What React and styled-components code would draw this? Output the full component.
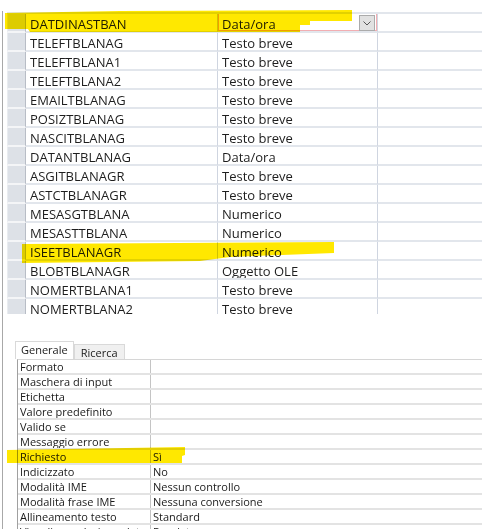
import React from 'react';
import styled, { createGlobalStyle } from 'styled-components';

const GlobalStyle = createGlobalStyle`
  html, body { margin: 0; padding: 0; background: #fff; }
  #root { width: 482px; height: 529px; }
`;

const Screen = styled.div`
  position: relative;
  width: 482px;
  height: 529px;
  overflow: hidden;
  background: #fff;
  padding-top: 11px;
  box-sizing: border-box;
`;

const Frame = styled.div`
  margin-left: 2px;
  height: 100%;
  border-left: 1px solid #a8a8a8;
  display: flex;
  flex-direction: column;
`;

/* ---------- field design grid ---------- */

const DesignGrid = styled.div`
  margin-left: 4px;
  margin-top: 1px;
  height: 300px;
  overflow: hidden;
  border-top: 2px solid #e2e6ec;
  flex: none;
`;

const GridRow = styled.div`
  display: grid;
  grid-template-columns: 19px 192px 160px 1fr;
  height: 19px;
`;

const Selector = styled.div`
  box-sizing: border-box;
  background: #dde1e7;
  border-left: 1px solid #e9ecf0;
  border-right: 1px solid #b8bdc6;
  border-bottom: 2px solid #f4f5f7;
`;

const Cell = styled.div`
  position: relative;
  box-sizing: border-box;
  border-bottom: 2px solid #e2e6ec;
  border-right: ${(p) => (p.$last ? 'none' : '1px solid #cfd5e0')};
  padding: 1px 0 0 4px;
  font-family: "Open Sans", "Noto Sans", sans-serif;
  font-size: 13px;
  line-height: 18px;
  color: #1e1e1e;
  white-space: nowrap;
  overflow: hidden;
`;

const ActiveCell = styled.div`
  position: absolute;
  left: -1px;
  top: -2px;
  right: -1px;
  bottom: -1px;
  border: 2px solid #f2aeb2;
  pointer-events: none;
`;

const DropButton = styled.div`
  position: absolute;
  right: 2px;
  top: 1px;
  width: 16px;
  height: 16px;
  box-sizing: border-box;
  background: #e1e1e1;
  border: 1px solid #ababab;
  display: flex;
  align-items: center;
  justify-content: center;
`;

/* ---------- field properties ---------- */

const PropertyPane = styled.div`
  margin-top: 27px;
  display: flex;
  flex-direction: column;
  font-family: "Open Sans", "Noto Sans", sans-serif;
  font-size: 11px;
  color: #1a1a1a;
`;

const TabStrip = styled.div`
  display: flex;
  align-items: flex-end;
  margin-left: 12px;
  height: 18px;
`;

const Tab = styled.div`
  box-sizing: border-box;
  height: ${(p) => (p.$active ? '18px' : '15px')};
  padding: 0 ${(p) => (p.$active ? '5px' : '6px')};
  background: ${(p) => (p.$active ? '#ffffff' : '#f0f0f0')};
  border: 1px solid #d9d9d9;
  border-bottom: none;
  line-height: ${(p) => (p.$active ? '16px' : '15px')};
  white-space: nowrap;
`;

const PropTable = styled.div`
  margin-left: 14px;
  border-top: 1px solid #d6d6d6;
  border-left: 1px solid #a0a0a0;
`;

const PropRow = styled.div`
  display: grid;
  grid-template-columns: 133px 1fr;
  height: 15px;
  box-sizing: border-box;
  border-bottom: 2px solid #e3e3e3;
`;

const PropLabel = styled.div`
  padding-left: 2px;
  border-right: 1px solid #c4c4c4;
  line-height: 13px;
  white-space: nowrap;
  overflow: hidden;
`;

const PropValue = styled.div`
  padding-left: 2px;
  line-height: 13px;
  white-space: nowrap;
  overflow: hidden;
`;

/* ---------- marker strokes drawn on top ---------- */

const Marker = styled.svg`
  position: absolute;
  left: 0;
  top: 0;
  width: 482px;
  height: 529px;
  pointer-events: none;
  mix-blend-mode: multiply;
`;

const fields = [
  ['DATDINASTBAN', 'Data/ora'],
  ['TELEFTBLANAG', 'Testo breve'],
  ['TELEFTBLANA1', 'Testo breve'],
  ['TELEFTBLANA2', 'Testo breve'],
  ['EMAILTBLANAG', 'Testo breve'],
  ['POSIZTBLANAG', 'Testo breve'],
  ['NASCITBLANAG', 'Testo breve'],
  ['DATANTBLANAG', 'Data/ora'],
  ['ASGITBLANAGR', 'Testo breve'],
  ['ASTCTBLANAGR', 'Testo breve'],
  ['MESASGTBLANA', 'Numerico'],
  ['MESASTTBLANA', 'Numerico'],
  ['ISEETBLANAGR', 'Numerico'],
  ['BLOBTBLANAGR', 'Oggetto OLE'],
  ['NOMERTBLANA1', 'Testo breve'],
  ['NOMERTBLANA2', 'Testo breve'],
];

const properties = [
  ['Formato', ''],
  ['Maschera di input', ''],
  ['Etichetta', ''],
  ['Valore predefinito', ''],
  ['Valido se', ''],
  ['Messaggio errore', ''],
  ['Richiesto', 'Sì'],
  ['Indicizzato', 'No'],
  ['Modalità IME', 'Nessun controllo'],
  ['Modalità frase IME', 'Nessuna conversione'],
  ['Allineamento testo', 'Standard'],
  ['Visualizza selezione data', 'Per date'],
];

export default function App() {
  return (
    <>
      <GlobalStyle />
      <Screen>
        <Frame>
          <DesignGrid>
            {fields.map(([name, type], i) => (
              <GridRow key={name}>
                <Selector />
                <Cell>{name}</Cell>
                <Cell>
                  {type}
                  {i === 0 && (
                    <>
                      <ActiveCell />
                      <DropButton>
                        <svg width="8" height="5" viewBox="0 0 8 5">
                          <path d="M0.5 0.5 L4 4 L7.5 0.5" fill="none" stroke="#555" strokeWidth="1" />
                        </svg>
                      </DropButton>
                    </>
                  )}
                </Cell>
                <Cell $last />
              </GridRow>
            ))}
          </DesignGrid>

          <PropertyPane>
            <TabStrip>
              <Tab $active>Generale</Tab>
              <Tab>Ricerca</Tab>
            </TabStrip>
            <PropTable>
              {properties.map(([label, value]) => (
                <PropRow key={label}>
                  <PropLabel>{label}</PropLabel>
                  <PropValue>{value}</PropValue>
                </PropRow>
              ))}
            </PropTable>
          </PropertyPane>
        </Frame>

        <Marker viewBox="0 0 482 529">
          <path d="M5 13 L120 11 L352 10 L352 21 L310 21 L310 25 L300 25 L300 32 L30 32 L28 29 L5 29 Z" fill="#ffe800" />
          <path d="M22 244 L334 242 L334 253 L230 257 L200 261 L22 263 Z" fill="#ffe800" />
          <path d="M7 450 L185 447 L185 455 L182 456 L182 463 L7 463 Z" fill="#ffe800" />
        </Marker>
      </Screen>
    </>
  );
}
